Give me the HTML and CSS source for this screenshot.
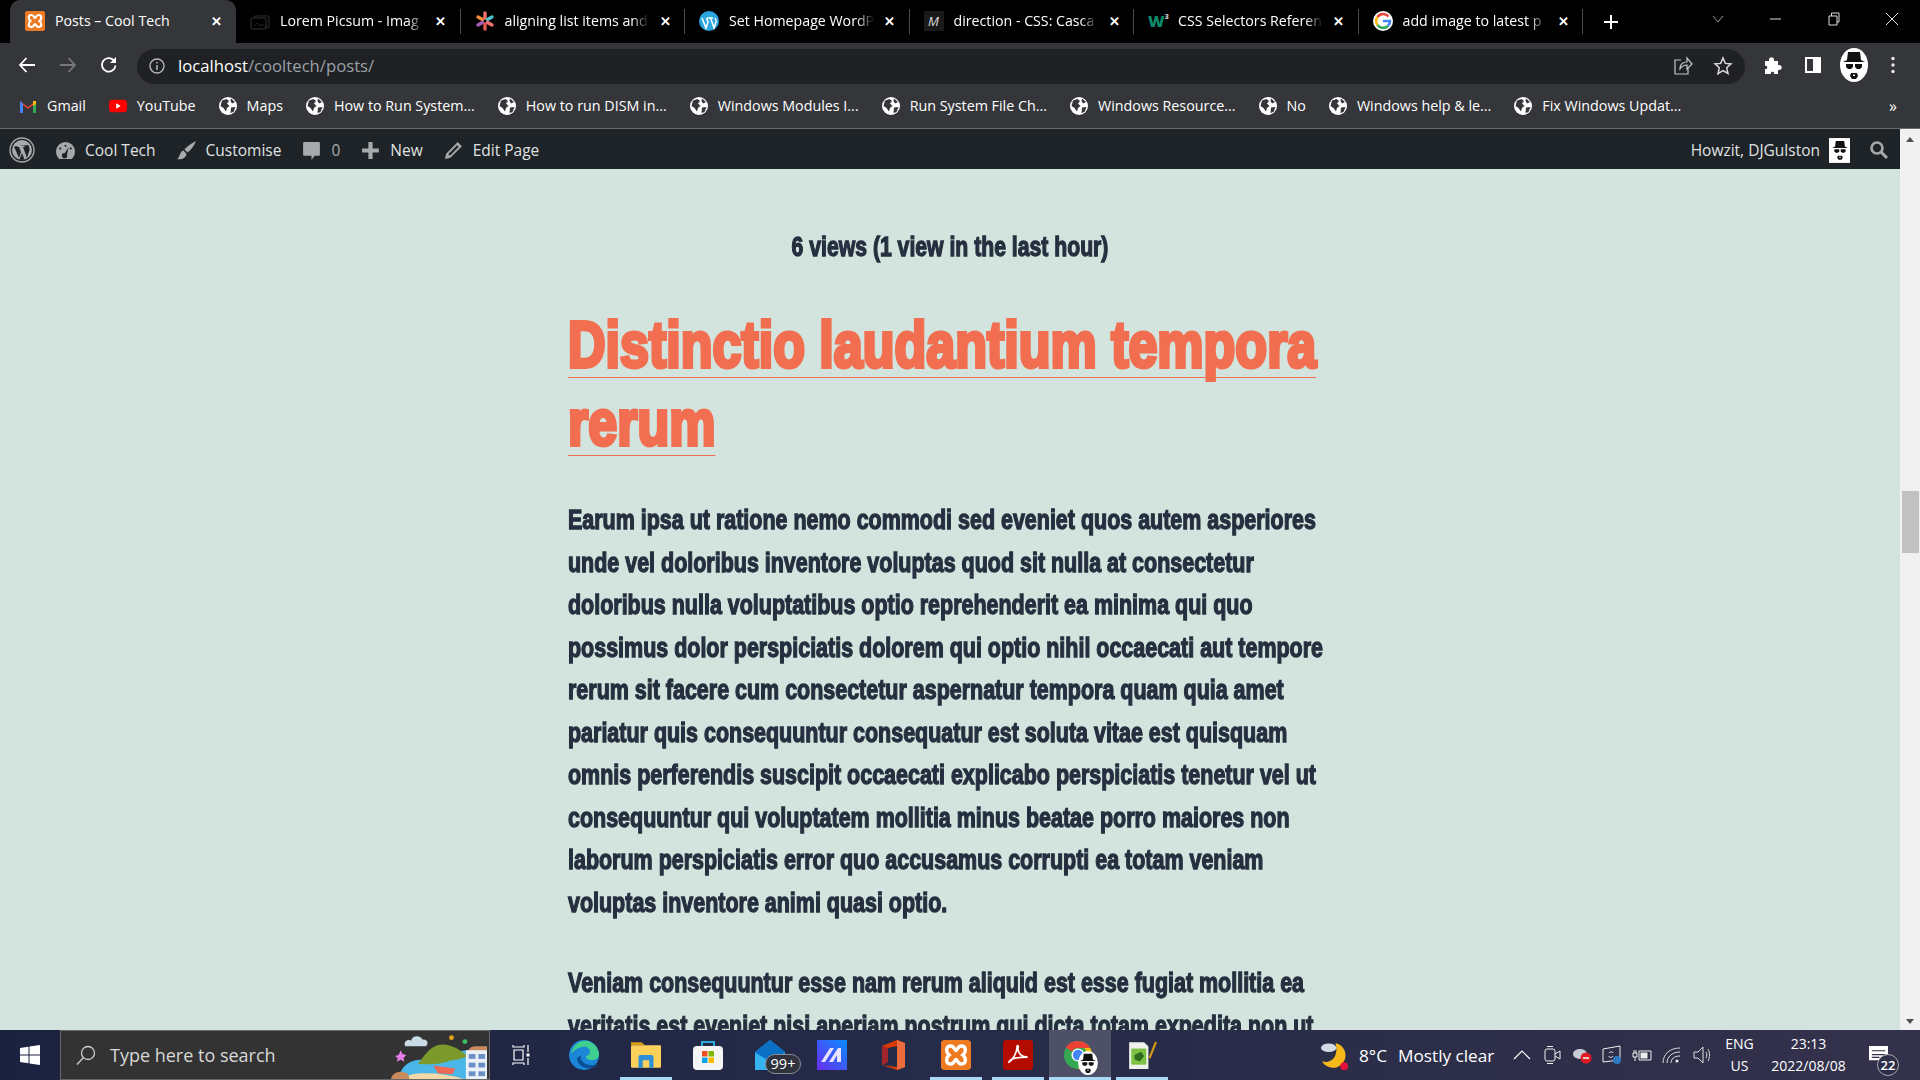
FILE: index.html
```html
<!DOCTYPE html>
<html lang="en">
<head>
  <meta charset="UTF-8">
  <title>Posts – Cool Tech</title>
  <link rel="stylesheet" href="styles.css">
</head>
<body>
  <svg class="defs" width="0" height="0">
    <symbol id="globe" viewBox="0 0 18 18">
      <circle cx="9" cy="9" r="9" fill="#fff"/>
      <path d="M3 3.500 7.500 2 10 4 8 6.500 10.500 9 8 11 7 14.500 4.500 11 1.500 9ZM12 1.500 16 5 13 6.500 11.500 4ZM12 10.500 16.500 10 14.500 15 11.500 16Z" fill="#35363a"/>
    </symbol>
    <symbol id="heisen" viewBox="0 0 28 34">
      <ellipse cx="14" cy="17" rx="14" ry="17" fill="#fff"/>
      <path d="M8 4h12l1 8 4 2H3l4-2Z" fill="#111"/>
      <path d="M6 16h7v3l-2 2H8l-2-2ZM15 16h7v3l-2 2h-3l-2-2Z" fill="#111"/>
      <path d="M11 25h6l1 3-2 3h-4l-2-3Z" fill="#111"/>
      <rect x="13" y="26.500" width="2" height="1.500" fill="#fff"/>
    </symbol>
    <symbol id="xampp" viewBox="0 0 20 20">
      <rect width="20" height="20" rx="2" fill="#ee7a22"/>
      <path d="M6.500 4C3 4 3 8 5.500 10 3 12 3 16 6.500 16 9 16 9 13 10 13S11 16 13.500 16C17 16 17 12 14.500 10 17 8 17 4 13.500 4 11 4 11 7 10 7S9 4 6.500 4Z" fill="none" stroke="#fff" stroke-width="2.200"/>
    </symbol>
    <symbol id="wp" viewBox="0 0 26 26">
      <circle cx="13" cy="13" r="12" fill="none" stroke="currentColor" stroke-width="1.400"/>
      <circle cx="13" cy="13" r="10" fill="currentColor"/>
      <path d="M5 9.500 10 21 12 15 10 10H8.500V9h7v1H14l4 11 2.500-8c.5-2-1-3.500-1-5M13 16l-2.500 6.500c1.500.5 3.500.5 5 0Z" fill="#1d2327"/>
    </symbol>
  </svg>

  <div class="tabstrip">
    <div class="tab tab-active">
      <svg class="favicon"><use href="#xampp"/></svg>
      <span class="tab-title">Posts – Cool Tech</span>
      <span class="tab-close">✕</span>
    </div>
    <div class="tab tab-second">
      <svg class="favicon" viewBox="0 0 20 20"><rect x="4" y="5" width="15" height="12" rx="2" fill="none" stroke="#222" stroke-width="1.500"/><rect x="1" y="7" width="15" height="11" rx="2" fill="#000" stroke="#222" stroke-width="1.500"/><path d="M3 16l4-4 3 3 2-2 3 3" fill="none" stroke="#222"/></svg>
      <span class="tab-title">Lorem Picsum - Imag</span>
      <span class="tab-close">✕</span>
    </div>
    <div class="tab">
      <svg class="favicon" viewBox="0 0 20 20"><g stroke-width="3.400" stroke-linecap="round"><path d="M10 2v5" stroke="#f2706b"/><path d="M10 13v5" stroke="#e8574f"/><path d="M3 6l4.500 2.500" stroke="#f08c3c"/><path d="M17 6l-4.500 2.500" stroke="#4fc3c8"/><path d="M3 14l4.500-2.500" stroke="#a35dbb"/><path d="M17 14l-4.500-2.500" stroke="#f2706b"/></g></svg>
      <span class="tab-title">aligning list items and</span>
      <span class="tab-close">✕</span>
    </div>
    <div class="tab">
      <svg class="favicon" viewBox="0 0 20 20"><circle cx="10" cy="10" r="10" fill="#2ba5dd"/><path d="M3 7l4 10 2-6-1.500-4M8 7h6M11.500 7 15 17l2-6c.5-2-.5-3-1-4" fill="none" stroke="#fff" stroke-width="1.500"/></svg>
      <span class="tab-title">Set Homepage WordP</span>
      <span class="tab-close">✕</span>
    </div>
    <div class="tab">
      <span class="favicon mdn-icon">M</span>
      <span class="tab-title">direction - CSS: Casca</span>
      <span class="tab-close">✕</span>
    </div>
    <div class="tab">
      <span class="favicon w3-icon">W<sup>3</sup></span>
      <span class="tab-title">CSS Selectors Referen</span>
      <span class="tab-close">✕</span>
    </div>
    <div class="tab">
      <svg class="favicon" viewBox="0 0 20 20"><circle cx="10" cy="10" r="10" fill="#fff"/><path d="M15.500 5.500A7 7 0 0 0 4.500 6" fill="none" stroke="#ea4335" stroke-width="2.600"/><path d="M4.500 6a7 7 0 0 0 0 8" fill="none" stroke="#fbbc05" stroke-width="2.600"/><path d="M4.500 14a7 7 0 0 0 10.500 1" fill="none" stroke="#34a853" stroke-width="2.600"/><path d="M15 15a7 7 0 0 0 2-5h-7" fill="none" stroke="#4285f4" stroke-width="2.600"/></svg>
      <span class="tab-title">add image to latest p</span>
      <span class="tab-close">✕</span>
    </div>
    <svg class="new-tab" viewBox="0 0 14 14"><path d="M7 0v14M0 7h14" stroke="#fff" stroke-width="2"/></svg>
    <div class="window-controls">
      <svg viewBox="0 0 14 14"><path d="M2 4l5 6 5-6" fill="none" stroke="#999"/></svg>
      <svg viewBox="0 0 14 14"><path d="M1 7h11" stroke="#ddd"/></svg>
      <svg viewBox="0 0 14 14"><path d="M2 4h8v9H2ZM4.500 4V1h7.500v9h-2" fill="none" stroke="#ddd"/></svg>
      <svg viewBox="0 0 14 14"><path d="M1 1l12 12M13 1 1 13" stroke="#ddd"/></svg>
    </div>
  </div>

  <div class="toolbar">
    <svg class="nav-icon" viewBox="0 0 18 18"><path d="M17 9H2M8.500 2 2 9l6.500 7" fill="none" stroke="#fff" stroke-width="1.800"/></svg>
    <svg class="nav-icon" viewBox="0 0 18 18"><path d="M1 9h15M9.500 2 16 9l-6.500 7" fill="none" stroke="#77787a" stroke-width="1.800"/></svg>
    <svg class="nav-icon" viewBox="0 0 18 18"><path d="M15.500 9.500A6.800 6.800 0 1 1 13.500 4" fill="none" stroke="#fff" stroke-width="1.800"/><path d="M16 1v6h-6Z" fill="#fff"/></svg>
    <div class="omnibox">
      <svg class="info-icon" viewBox="0 0 16 16"><circle cx="8" cy="8" r="7" fill="none" stroke="#b4b6b8" stroke-width="1.400"/><path d="M8 7v5M8 4v1.600" stroke="#b4b6b8" stroke-width="1.500"/></svg>
      <span class="url-host">localhost</span><span class="url-path">/cooltech/posts/</span>
      <svg class="omni-icon omni-share" viewBox="0 0 20 20"><path d="M8 4H2v14h13v-6M7 13c0-5 3-7 7-7V2l5 6-5 5V9c-3 0-5 1-7 4Z" fill="none" stroke="#c4c6c8" stroke-width="1.200"/></svg>
      <svg class="omni-icon" viewBox="0 0 20 20"><path d="M10 2l2.300 5.400 5.700.5-4.300 3.900 1.300 5.700L10 14.600l-5 3 1.300-5.800L2 7.900l5.700-.5Z" fill="none" stroke="#d8d9da" stroke-width="1.500"/></svg>
    </div>
    <svg class="puzzle" viewBox="0 0 20 20"><path d="M2 6h4c-1-5 6-5 5 0h4v4c5-1 5 6 0 5v4h-4c1-3-4-3-3 0H2v-5c3 1 3-4 0-3Z" fill="#fff"/></svg>
    <svg class="side-panel" viewBox="0 0 18 18"><path fill-rule="evenodd" d="M1 1h16v16H1ZM3 3v12h6V3Z" fill="#fff"/></svg>
    <svg class="avatar"><use href="#heisen"/></svg>
    <svg class="menu-dots" viewBox="0 0 4 18"><circle cx="2" cy="2.500" r="1.700" fill="#e8e8e8"/><circle cx="2" cy="9" r="1.700" fill="#e8e8e8"/><circle cx="2" cy="15.500" r="1.700" fill="#e8e8e8"/></svg>
  </div>

  <div class="bookmarks">
    <a class="bookmark"><svg viewBox="0 0 18 18"><path d="M1 16V4l8 6 8-6v12h-3V8l-5 4-5-4v8Z" fill="#ea4335"/><path d="M1 4v12h3V6.500Z" fill="#4285f4"/><path d="M17 4v12h-3V6.500Z" fill="#34a853"/><path d="M14 4l3 0v3l-3 2Z" fill="#fbbc05"/></svg>Gmail</a>
    <a class="bookmark"><svg viewBox="0 0 20 18"><rect y="2" width="20" height="14" rx="4" fill="#f00"/><path d="M8 6v6l5-3Z" fill="#fff"/></svg>YouTube</a>
    <a class="bookmark"><svg><use href="#globe"/></svg>Maps</a>
    <a class="bookmark"><svg><use href="#globe"/></svg>How to Run System...</a>
    <a class="bookmark"><svg><use href="#globe"/></svg>How to run DISM in...</a>
    <a class="bookmark"><svg><use href="#globe"/></svg>Windows Modules I...</a>
    <a class="bookmark"><svg><use href="#globe"/></svg>Run System File Ch...</a>
    <a class="bookmark"><svg><use href="#globe"/></svg>Windows Resource...</a>
    <a class="bookmark"><svg><use href="#globe"/></svg>No</a>
    <a class="bookmark"><svg><use href="#globe"/></svg>Windows help &amp; le...</a>
    <a class="bookmark"><svg><use href="#globe"/></svg>Fix Windows Updat...</a>
    <span class="bookmarks-more">»</span>
  </div>

  <div class="viewport">
    <div class="page">
      <div class="adminbar">
        <svg class="wp-logo"><use href="#wp"/></svg>
        <a class="admin-item"><svg viewBox="0 0 20 20"><path fill-rule="evenodd" d="M10 2a9 9 0 0 1 9 9c0 3-1 5-3 7H4c-2-2-3-4-3-7a9 9 0 0 1 9-9ZM10 4.500a1 1 0 1 0 .01 0ZM5 7a1 1 0 1 0 .01 0ZM15 7a1 1 0 1 0 .01 0ZM13 7l-3.800 5.500a2.500 2.500 0 1 0 2.200 1.500Z" fill="#a7aaad"/></svg>Cool Tech</a>
        <a class="admin-item"><svg viewBox="0 0 20 20"><path d="M19 1c-2 5-5 9-8 11l-3-3c3-3 7-6 11-8ZM7 10l3 3c0 4-5 6-9 5 2-1 2-3 3-5 1-2 2-3 3-3Z" fill="#a7aaad"/></svg>Customise</a>
        <a class="admin-item admin-comments"><svg viewBox="0 0 20 20"><path d="M3 2h14a1 1 0 0 1 1 1v11a1 1 0 0 1-1 1h-4l-3 4v-4H3a1 1 0 0 1-1-1V3a1 1 0 0 1 1-1Z" fill="#a7aaad"/></svg><span class="count">0</span></a>
        <a class="admin-item"><svg viewBox="0 0 20 20"><path d="M8 2h4v6h6v4h-6v6H8v-6H2V8h6Z" fill="#a7aaad"/></svg>New</a>
        <a class="admin-item"><svg viewBox="0 0 20 20"><path fill-rule="evenodd" d="M14 2l4 4L7 17l-5 1 1-5ZM13.500 5 5 13.500l1.500 1.500L15 6.500Z" fill="#a7aaad"/></svg>Edit Page</a>
        <a class="admin-user">Howzit, DJGulston<svg viewBox="0 0 22 26"><rect width="22" height="26" fill="#fff"/><svg x="1" y="0" width="20" height="25"><use href="#heisen"/></svg></svg></a>
        <svg class="admin-search" viewBox="0 0 20 20"><circle cx="8" cy="8" r="5.500" fill="none" stroke="#a7aaad" stroke-width="2.600"/><path d="M12 12l6 6" stroke="#a7aaad" stroke-width="3"/></svg>
      </div>

      <main class="content">
        <div class="post">
          <p class="views">6 views (1 view in the last hour)</p>
          <h2 class="post-title"><a>Distinctio laudantium tempora<br>rerum</a></h2>
          <p class="post-text">Earum ipsa ut ratione nemo commodi sed eveniet quos autem asperiores<br>
          unde vel doloribus inventore voluptas quod sit nulla at consectetur<br>
          doloribus nulla voluptatibus optio reprehenderit ea minima qui quo<br>
          possimus dolor perspiciatis dolorem qui optio nihil occaecati aut tempore<br>
          rerum sit facere cum consectetur aspernatur tempora quam quia amet<br>
          pariatur quis consequuntur consequatur est soluta vitae est quisquam<br>
          omnis perferendis suscipit occaecati explicabo perspiciatis tenetur vel ut<br>
          consequuntur qui voluptatem mollitia minus beatae porro maiores non<br>
          laborum perspiciatis error quo accusamus corrupti ea totam veniam<br>
          voluptas inventore animi quasi optio.</p>
          <p class="post-text">Veniam consequuntur esse nam rerum aliquid est esse fugiat mollitia ea<br>
          veritatis est eveniet nisi aperiam nostrum qui dicta totam expedita non ut</p>
        </div>
      </main>
    </div>
    <div class="scrollbar">
      <span class="arrow-up"></span>
      <div class="scroll-thumb"></div>
      <span class="arrow-down"></span>
    </div>
  </div>

  <div class="taskbar">
    <svg class="start" viewBox="0 0 20 20"><path d="M0 3l8.500-1.200V9.500H0ZM9.500 1.600 20 0v9.500H9.500ZM0 10.500h8.500v7.700L0 17ZM9.500 10.500H20V20L9.500 18.400Z" fill="#fff"/></svg>
    <div class="search-box">
      <svg class="search-icon" viewBox="0 0 20 20"><circle cx="12" cy="8" r="6.500" fill="none" stroke="#d0d0d0" stroke-width="1.300"/><path d="M7.500 12.500 1 19.500" stroke="#d0d0d0" stroke-width="1.300"/></svg>
      <span class="search-text">Type here to search</span>
      <svg class="search-art" viewBox="0 0 100 50">
        <path d="M15 16c-3-5 3-8 6-6 1-6 10-6 12-1 5-1 7 5 3 7Z" fill="#c9dbe6"/>
        <circle cx="63" cy="7" r="2.500" fill="#e8a317"/>
        <circle cx="77" cy="11" r="2.500" fill="#3cc464"/>
        <path d="M4 26l4-1 2-5 2 4 4 1-3 3 1 4-4-2-4 2 1-4Z" fill="#e27ee8"/>
        <path d="M8 50c2-14 12-20 24-20l30-8 38-4v32Z" fill="#4bb7e8"/>
        <path d="M28 34c6-6 12-20 26-20 10 0 18 6 26 12-10 5-14 3-22 6-10 3-20 3-30 2Z" fill="#7b9a2b"/>
        <path d="M82 24c-4-3 0-8 6-8h12v8Z" fill="#c98a5d"/>
        <path d="M14 50c3-5 12-6 22-6 14 0 28 2 40 6Z" fill="#f4d9a8"/>
        <path d="M0 50c1-6 8-9 14-7 4 1 5 4 5 7Z" fill="#c98a5d"/>
        <path d="M44 36l23 3-3 6-15-1Z" fill="#ef6a55"/>
        <rect x="78" y="20" width="22" height="30" fill="#eaf1f7"/>
        <rect x="81" y="24" width="7" height="5" fill="#6b8fc7"/><rect x="91" y="24" width="7" height="5" fill="#6b8fc7"/>
        <rect x="81" y="33" width="7" height="5" fill="#6b8fc7"/><rect x="91" y="33" width="7" height="5" fill="#6b8fc7"/>
        <rect x="81" y="42" width="7" height="5" fill="#6b8fc7"/><rect x="91" y="42" width="7" height="5" fill="#6b8fc7"/>
      </svg>
    </div>
    <div class="task-view">
      <svg viewBox="0 0 20 20"><path d="M1 0v2h11V0M1 20v-2h11v2M2 5h9v10H2ZM16 0v7M16 13v7" fill="none" stroke="#fff" stroke-width="1.200"/><rect x="14.500" y="8.500" width="3" height="3" fill="#fff"/></svg>
    </div>
    <div class="task-app">
      <svg viewBox="0 0 30 30"><circle cx="15" cy="15" r="15" fill="#1b87d6"/><path d="M2 14C4 4 12 0 18 1c7 1 12 7 12 14 0 3-3 5-7 5-3 0-6-1-6-3 0-2 4-1 4-5 0-4-4-6-8-5-5 1-9 4-11 7Z" fill="#3fcf8e"/><path d="M8 18c0 6 6 11 13 10 3 0 6-2 8-4-3 1-10 2-14-1-3-2-4-5-3-8Z" fill="#0c4f94"/></svg>
    </div>
    <div class="task-app running">
      <svg viewBox="0 0 28 28"><path d="M0 2h10l3 3h-13Z" fill="#d89c10"/><rect y="5" width="28" height="21" rx="1" fill="#fbd15b"/><path d="M7 26V16a2 2 0 0 1 2-2h10a2 2 0 0 1 2 2v10h-4v-7h-6v7Z" fill="#2d8fd8"/></svg>
    </div>
    <div class="task-app">
      <svg viewBox="0 0 30 30"><path d="M9 7V2h12v5" fill="none" stroke="#2ca7e0" stroke-width="2"/><rect y="6" width="30" height="24" rx="4" fill="#f4f4f4"/><rect x="9" y="11" width="5.500" height="5.500" fill="#f25022"/><rect x="15.500" y="11" width="5.500" height="5.500" fill="#7fba00"/><rect x="9" y="17.500" width="5.500" height="5.500" fill="#00a4ef"/><rect x="15.500" y="17.500" width="5.500" height="5.500" fill="#ffb900"/></svg>
    </div>
    <div class="task-app">
      <svg class="mail-icon" viewBox="0 0 30 30"><path d="M0 12 15 0l15 12v14H0Z" fill="#1c9be6"/><path d="M0 12l15 9 15-9v-0L15 0Z" fill="#0b6fc4"/><path d="M0 13l15 9 15-9v17H0Z" fill="#35b2f0"/></svg>
      <span class="mail-badge">99+</span>
    </div>
    <div class="task-app">
      <svg viewBox="0 0 30 30"><defs><linearGradient id="mat" x1="0" y1="1" x2="1" y2="0"><stop offset="0" stop-color="#6a2cf0"/><stop offset="1" stop-color="#0a8cff"/></linearGradient></defs><rect width="30" height="30" fill="url(#mat)"/><path d="M4 22 13 8h4L8 22ZM12 22 21 8h3v14h-4v-7l-4 7Z" fill="#e8e4ff"/></svg>
    </div>
    <div class="task-app">
      <svg viewBox="0 0 24 30"><path d="M0 6 15 0l8 3v24l-8 3-15-5 15 2V6L6 8v14l-6 3Z" fill="#d83b01"/><path d="M0 6l6 2v14l-6 3Z" fill="#a4262c"/><path d="M15 0l8 3v24l-8 3Z" fill="#eb6c3c"/></svg>
    </div>
    <div class="task-app running">
      <svg class="xampp-big"><use href="#xampp"/></svg>
    </div>
    <div class="task-app running">
      <svg viewBox="0 0 28 28"><rect width="28" height="28" rx="3" fill="#b30b00"/><path d="M5 21c4-2 8-9 8-14 0-3 2-2 1 1 0 5 4 8 9 8-4 0-11 0-15 2-2 1-2 3-3 3Z" fill="none" stroke="#fff" stroke-width="1.500"/></svg>
    </div>
    <div class="task-app running active-app">
      <svg class="chrome-icon" viewBox="0 0 30 30"><circle cx="15" cy="15" r="15" fill="#34a853"/><path d="M15 0a15 15 0 0 1 13 7.500H15a7.500 7.500 0 0 0-6.500 3.700L2 7A15 15 0 0 1 15 0Z" fill="#ea4335"/><path d="M28 7.500A15 15 0 0 1 15 30l6.500-11a7.500 7.500 0 0 0 0-11.500Z" fill="#fbbc05"/><circle cx="15" cy="15" r="7" fill="#fff"/><circle cx="15" cy="15" r="5.500" fill="#4285f4"/></svg>
      <svg class="chrome-avatar"><use href="#heisen"/></svg>
    </div>
    <div class="task-app running">
      <svg viewBox="0 0 28 28"><path d="M2 2h14l4 4v21H2Z" fill="#eef2ea"/><rect x="4" y="8" width="14" height="15" fill="#7cc242"/><path d="M7 14l6-3 3 4-4 5-5-2Z" fill="#2f6b1c"/><path d="M21 17 27 2" stroke="#d89c10" stroke-width="2"/></svg>
    </div>

    <div class="tray">
      <div class="weather">
        <svg class="weather-icon" viewBox="0 0 30 30"><path d="M16 2a13 13 0 1 1-14 19c9 3 18-4 14-19Z" fill="#f7b81b"/><ellipse cx="9" cy="7" rx="8" ry="4.500" fill="#d3dbe4"/><circle cx="25" cy="26" r="4" fill="#e0123c"/></svg>
        <span class="temp">8°C</span>
        <span class="forecast">Mostly clear</span>
      </div>
      <svg class="tray-icon" viewBox="0 0 20 20"><path d="M2 14l8-8 8 8" fill="none" stroke="#fff" stroke-width="1.200"/></svg>
      <svg class="tray-icon" viewBox="0 0 20 20"><rect x="3" y="4" width="10" height="12" rx="2" fill="none" stroke="#eee"/><path d="M13 9l5-3v8l-5-3M5 1.500h6M5 18.500h6" fill="none" stroke="#eee"/></svg>
      <svg class="tray-icon" viewBox="0 0 20 20"><ellipse cx="8" cy="9" rx="7" ry="5" fill="#c8ccd4"/><circle cx="14" cy="13" r="5.500" fill="#e01b24"/><path d="M11 13h6" stroke="#fff" stroke-width="1.500"/></svg>
      <svg class="tray-icon" viewBox="0 0 20 20"><path d="M1 4 18 1v14L1 17Z" fill="none" stroke="#eee"/><path d="M7 8c2-2 4-1 4 0M11 11c-1 2-4 2-4 0" fill="none" stroke="#eee"/><circle cx="15" cy="15" r="4" fill="#2f78c4"/></svg>
      <svg class="tray-icon" viewBox="0 0 20 20"><path d="M7 6h12v9H7Z" fill="none" stroke="#eee"/><rect x="8.500" y="7.500" width="7" height="6" fill="#eee"/><path d="M1 8h4v4H1ZM2 5v3M4 5v3M3 12v4" fill="none" stroke="#eee"/></svg>
      <svg class="tray-icon" viewBox="0 0 20 20"><path d="M1 18C1 9 8 3 18 3M5 18c0-6 5-11 13-11M9 18c0-4 3-7 9-7" fill="none" stroke="#ddd"/><circle cx="15" cy="16" r="1.500" fill="#eee"/></svg>
      <svg class="tray-icon" viewBox="0 0 20 20"><path d="M2 7h4l5-5v16l-5-5H2ZM14 7c1 2 1 4 0 6M16 4c2 4 2 8 0 12" fill="none" stroke="#ddd"/></svg>
      <div class="lang">ENG<br>US</div>
      <div class="clock">23:13<br>2022/08/08</div>
      <div class="notify">
        <svg viewBox="0 0 20 20"><path d="M0 0h20v15H0Z" fill="#fff"/><path d="M3 5h14M3 9h14M3 12h8" stroke="#2d2e47" stroke-width="1.300"/></svg>
        <span class="notify-count">22</span>
      </div>
    </div>
  </div>
</body>
</html>
```

FILE: styles.css
```css
* {
  margin: 0;
  padding: 0;
  box-sizing: border-box;
}

html, body {
  height: 100%;
  overflow: hidden;
}

body {
  display: flex;
  flex-direction: column;
  font-family: 'Open Sans', 'Liberation Sans', sans-serif;
  font-size: 14px;
  color: #fff;
  background: #000;
}

.defs {
  position: absolute;
}

svg {
  flex-shrink: 0;
}

/* tab strip */
.tabstrip {
  height: 43px;
  background: #000;
  display: flex;
  align-items: stretch;
  padding-left: 10px;
}

.tab {
  width: 224.500px;
  display: flex;
  align-items: center;
  gap: 10px;
  padding: 0 14px 2px;
  position: relative;
}

.tab::after {
  content: '';
  position: absolute;
  right: 0;
  top: 9px;
  bottom: 9px;
  width: 1px;
  background: #4a4b4d;
}

.tab-active {
  width: 226px;
  padding-left: 15px;
  background: #35363a;
  border-radius: 10px 10px 0 0;
}

.tab-active::after {
  display: none;
}

.favicon {
  width: 20px;
  height: 20px;
  flex-shrink: 0;
}

.mdn-icon {
  background: #1a1a1a;
  color: #ddd;
  font-style: italic;
  font-size: 13px;
  line-height: 20px;
  text-align: center;
}

.w3-icon {
  color: #0c8a6a;
  font-weight: 800;
  font-size: 16px;
  line-height: 20px;
  white-space: nowrap;
}

.w3-icon sup {
  font-size: 7px;
  color: #ccc;
  vertical-align: top;
  line-height: 12px;
}

.tab-title {
  flex: 1;
  overflow: hidden;
  white-space: nowrap;
  font-size: 14.200px;
  -webkit-mask-image: linear-gradient(90deg, #000 88%, transparent);
  mask-image: linear-gradient(90deg, #000 88%, transparent);
}

.tab-active .tab-title {
  -webkit-mask-image: none;
  mask-image: none;
}

.tab-close {
  font-size: 13px;
  font-weight: 700;
  width: 12px;
  text-align: center;
}

.new-tab {
  width: 14px;
  height: 14px;
  align-self: center;
  margin-left: 21px;
}

.window-controls {
  margin-left: auto;
  display: flex;
  align-items: center;
  gap: 44px;
  padding: 0 21px 6px 0;
}

.window-controls svg {
  width: 14px;
  height: 14px;
}

/* toolbar */
.toolbar {
  height: 42px;
  background: #35363a;
  display: flex;
  align-items: center;
  padding-left: 18px;
}

.nav-icon {
  width: 18px;
  height: 18px;
  margin-right: 23px;
}

.nav-icon:nth-child(3) {
  margin-right: 19px;
}

.omnibox {
  width: 1608px;
  height: 35px;
  margin-top: 5px;
  background: #202124;
  border-radius: 18px;
  display: flex;
  align-items: center;
  padding: 0 0 2px 12px;
  font-size: 16.700px;
}

.toolbar > svg {
  margin-top: 2px;
}

.info-icon {
  width: 16px;
  height: 16px;
  margin-right: 13px;
}

.url-path {
  color: #9aa0a6;
}

.omni-icon {
  width: 20px;
  height: 20px;
  margin-right: 12px;
}

.omni-share {
  margin-left: auto;
  margin-right: 20px;
}

.puzzle {
  width: 20px;
  height: 20px;
  margin-left: 18px;
}

.side-panel {
  width: 18px;
  height: 18px;
  margin-left: 21px;
}

.avatar {
  width: 28px;
  height: 34px;
  margin-left: 18px;
}

.menu-dots {
  width: 4px;
  height: 18px;
  margin-left: 23px;
}

/* bookmarks bar */
.bookmarks {
  height: 44px;
  background: #35363a;
  border-bottom: 1px solid #6a6b6e;
  display: flex;
  align-items: center;
  padding: 0 0 2px 19px;
  gap: 23px;
  font-size: 14.300px;
}

.bookmark {
  display: flex;
  align-items: center;
  gap: 10px;
  white-space: nowrap;
}

.bookmark svg {
  width: 18px;
  height: 18px;
}

.bookmarks-more {
  margin-left: auto;
  padding-right: 23px;
  font-size: 16px;
}

/* page area */
.viewport {
  flex: 1;
  display: flex;
  min-height: 0;
}

.page {
  flex: 1;
  display: flex;
  flex-direction: column;
  min-width: 0;
}

.adminbar {
  height: 40px;
  flex-shrink: 0;
  background: #1d2327;
  color: #e0e2e3;
  display: flex;
  align-items: center;
  padding: 2px 11px 0 9px;
  gap: 20px;
  font-size: 15.500px;
}

.wp-logo {
  width: 26px;
  height: 26px;
  color: #a7aaad;
}

.admin-item {
  display: flex;
  align-items: center;
  gap: 9px;
  white-space: nowrap;
}

.admin-item svg {
  width: 21px;
  height: 21px;
}

.count {
  color: #a7aaad;
}

.admin-user {
  margin-left: auto;
  display: flex;
  align-items: center;
  gap: 9px;
}

.admin-user svg {
  width: 21px;
  height: 25px;
}

.admin-search {
  width: 20px;
  height: 20px;
  margin-left: -1px;
}

.content {
  flex: 1;
  overflow: hidden;
  background: #d2e4dd;
  color: #252f3f;
  padding-top: 57px;
}

/* the post face is a heavy condensed one, so the bold sans is squeezed */
.post {
  width: 764px;
  margin: 0 auto;
  font-family: 'Liberation Sans', sans-serif;
  font-weight: 700;
  white-space: nowrap;
}

.views {
  text-align: center;
  font-size: 27px;
  line-height: 42px;
  margin-bottom: 38px;
  -webkit-text-stroke: 1.300px #252f3f;
  transform: scaleX(0.785);
}

.post-title {
  font-size: 65px;
  line-height: 77.500px;
  margin-bottom: 38px;
  color: #f26e50;
  -webkit-text-stroke: 4px #f26e50;
  transform: scaleX(0.8);
  transform-origin: left center;
}

.post-title a {
  text-decoration: underline;
  text-decoration-thickness: 1px;
  text-underline-offset: 10px;
}

.post-text {
  font-size: 27px;
  line-height: 42.500px;
  margin-bottom: 38px;
  -webkit-text-stroke: 1.300px #252f3f;
  transform: scaleX(0.795);
  transform-origin: left center;
}

.scrollbar {
  width: 20px;
  background: #f1f1f1;
  display: flex;
  flex-direction: column;
  align-items: center;
  padding-top: 8px;
}

.arrow-up {
  border: 4.500px solid transparent;
  border-top: 0;
  border-bottom: 5px solid #505050;
}

.arrow-down {
  border: 4.500px solid transparent;
  border-bottom: 0;
  border-top: 5px solid #505050;
  margin-top: auto;
  margin-bottom: 6px;
}

.scroll-thumb {
  width: 17px;
  height: 62px;
  margin-top: 349px;
  background: #c1c1c1;
}

/* windows taskbar */
.taskbar {
  height: 50px;
  background: linear-gradient(90deg, #1b2240, #252b48 50%, #34314b);
  display: flex;
  align-items: center;
}

.start {
  width: 20px;
  height: 20px;
  margin: 0 20px;
}

.search-box {
  width: 430px;
  height: 50px;
  background: #333;
  border: 1px solid #666;
  display: flex;
  align-items: center;
  padding-left: 15px;
  font-size: 18px;
  color: #d8d8d8;
}

.search-icon {
  width: 20px;
  height: 20px;
  margin-right: 14px;
}

.search-art {
  width: 100px;
  height: 48px;
  margin-left: auto;
}

.task-view {
  width: 63px;
  display: flex;
  justify-content: center;
}

.task-view svg {
  width: 20px;
  height: 20px;
}

.task-app {
  width: 62px;
  height: 50px;
  display: flex;
  align-items: center;
  justify-content: center;
  position: relative;
}

.task-app svg {
  width: 30px;
  height: 30px;
}

.task-app.running::after {
  content: '';
  position: absolute;
  left: 5px;
  right: 5px;
  bottom: 0;
  height: 3px;
  background: #a9d9f5;
}

.active-app {
  background: #4e5068;
}

.active-app.running::after {
  left: 0;
  right: 0;
}

.xampp-big {
  border-radius: 3px;
}

.mail-badge {
  position: absolute;
  left: 26px;
  top: 24px;
  width: 36px;
  height: 20px;
  border-radius: 10px;
  background: #30333e;
  border: 1px solid #8a8c94;
  font-size: 14.500px;
  line-height: 18px;
  text-align: center;
  color: #fff;
}

.task-app .chrome-icon {
  width: 28px;
  height: 28px;
  margin-right: 4px;
}

.task-app .chrome-avatar {
  position: absolute;
  left: 29px;
  top: 21px;
  width: 20px;
  height: 24px;
}

.tray {
  margin-left: auto;
  display: flex;
  align-items: center;
}

.weather {
  width: 187px;
  display: flex;
  align-items: center;
  font-size: 17.200px;
}

.weather-icon {
  width: 29px;
  height: 29px;
  margin-right: 10px;
}

.temp {
  margin-right: 11px;
}

.tray-icon {
  width: 20px;
  height: 20px;
  margin: 0 5px;
}

.lang, .clock {
  text-align: center;
  font-size: 14px;
  line-height: 22px;
}

.lang {
  width: 45px;
}

.clock {
  width: 93px;
}

.notify {
  width: 65px;
  height: 50px;
  position: relative;
  display: flex;
  align-items: center;
  padding-left: 14px;
}

.notify svg {
  width: 19px;
  height: 19px;
}

.notify-count {
  position: absolute;
  left: 22px;
  top: 24px;
  width: 22px;
  height: 22px;
  border-radius: 50%;
  background: #2d2e47;
  border: 1px solid #aaa;
  font-size: 13px;
  font-weight: 600;
  line-height: 20px;
  text-align: center;
}
```
